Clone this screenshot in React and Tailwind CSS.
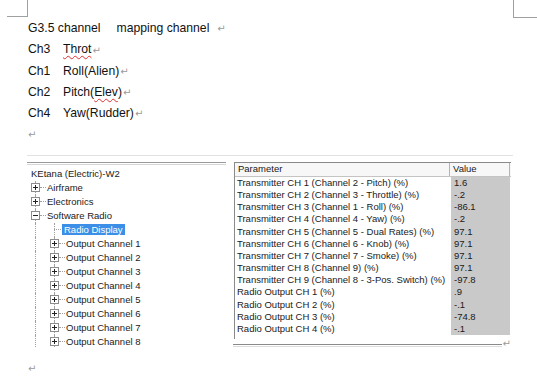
import React from "react";

const DOC_FONT = { fontFamily: '"Liberation Sans", Arial, sans-serif' };
const UI_FONT = { fontFamily: '"Liberation Sans", Tahoma, Arial, sans-serif' };

const rows = [
  ["Transmitter CH 1 (Channel 2 - Pitch) (%)", "1.6"],
  ["Transmitter CH 2 (Channel 3 - Throttle) (%)", "-.2"],
  ["Transmitter CH 3 (Channel 1 - Roll) (%)", "-86.1"],
  ["Transmitter CH 4 (Channel 4 - Yaw) (%)", "-.2"],
  ["Transmitter CH 5 (Channel 5 - Dual Rates) (%)", "97.1"],
  ["Transmitter CH 6 (Channel 6 - Knob) (%)", "97.1"],
  ["Transmitter CH 7 (Channel 7 - Smoke) (%)", "97.1"],
  ["Transmitter CH 8 (Channel 9) (%)", "97.1"],
  ["Transmitter CH 9 (Channel 8 - 3-Pos. Switch) (%)", "-97.8"],
  ["Radio Output CH 1 (%)", ".9"],
  ["Radio Output CH 2 (%)", "-.1"],
  ["Radio Output CH 3 (%)", "-74.8"],
  ["Radio Output CH 4 (%)", "-.1"],
];

function Ret({ className = "" }) {
  return (
    <span
      className={"text-[10px] text-[#9a9a9a] align-middle " + className}
      style={{ fontFamily: '"DejaVu Sans", sans-serif' }}
    >
      ↵
    </span>
  );
}

function ExpandBox({ open }) {
  return (
    <svg width="9" height="9" viewBox="0 0 9 9" className="relative block bg-white">
      <rect x="0.5" y="0.5" width="8" height="8" fill="#fff" stroke="#8c8c8c" />
      <line x1="2" y1="4.5" x2="7" y2="4.5" stroke="#222" />
      {!open && <line x1="4.5" y1="2" x2="4.5" y2="7" stroke="#222" />}
    </svg>
  );
}

function VLine() {
  return <div className="absolute left-[4px] top-0 bottom-0 border-l border-dotted border-[#a0a0a0]" />;
}

function LevelOne({ label, open }) {
  return (
    <div className="flex items-center h-[14px] pl-[4px]">
      <div className="relative w-[9px] h-full flex items-center">
        <VLine />
        <ExpandBox open={open} />
      </div>
      <div className="w-[6px] border-t border-dotted border-[#a0a0a0]" />
      <span className="ml-[1px]">{label}</span>
    </div>
  );
}

function LevelTwo({ label, leaf, selected }) {
  return (
    <div className="flex items-center h-[14px] pl-[4px]">
      <div className="relative w-[9px] h-full">
        <VLine />
      </div>
      <div className="w-[10px]" />
      <div className="relative w-[9px] h-full flex items-center">
        <VLine />
        {!leaf && <ExpandBox />}
      </div>
      <div className={(leaf ? "w-[7px] -ml-[5px] " : "w-[6px] ") + "border-t border-dotted border-[#a0a0a0]"} />
      {selected ? (
        <span className="ml-[1px] px-[2px] h-[11px] leading-[11px] bg-[#3b8fe6] text-white">{label}</span>
      ) : (
        <span className="ml-[1px]">{label}</span>
      )}
    </div>
  );
}

export default function App() {
  return (
    <div className="relative w-[537px] h-[382px] bg-white overflow-hidden text-[#111]" style={DOC_FONT}>
      <div className="absolute left-[27px] top-0 h-[17px] border-l border-[#a0a0a0]" />
      <div className="absolute left-[7px] top-[16px] w-[21px] border-t border-[#a0a0a0]" />
      <div className="absolute left-[513px] top-0 h-[18px] border-l border-[#a0a0a0]" />
      <div className="absolute left-[513px] top-[17px] w-[24px] border-t border-[#a0a0a0]" />

      <div className="pl-[28px] pt-[18px] text-[12.2px] leading-[21px]">
        <div>
          G3.5 channel<span className="ml-[16px]">mapping channel</span>
          <Ret className="ml-[8px]" />
        </div>
        <div className="flex">
          <span className="w-[35px]">Ch3</span>
          <span>
            <span className="underline decoration-wavy decoration-[#e03030] decoration-1 underline-offset-2">Throt</span>
            <Ret className="ml-[1px]" />
          </span>
        </div>
        <div className="flex">
          <span className="w-[35px]">Ch1</span>
          <span>
            Roll(Alien)
            <Ret className="ml-[1px]" />
          </span>
        </div>
        <div className="flex">
          <span className="w-[35px]">Ch2</span>
          <span>
            Pitch(
            <span className="underline decoration-wavy decoration-[#e03030] decoration-1 underline-offset-2">Elev</span>)
            <Ret className="ml-[1px]" />
          </span>
        </div>
        <div className="flex">
          <span className="w-[35px]">Ch4</span>
          <span>
            Yaw(Rudder)
            <Ret className="ml-[1px]" />
          </span>
        </div>
        <div>
          <Ret />
        </div>
      </div>

      <div className="ml-[27px] mt-[9px] w-[486px] border-t border-[#e2e2e2] pt-[5px] flex items-start text-[9.5px] text-[#1a1a1a]" style={UI_FONT}>
        <div className="w-[199px] h-[187px] overflow-hidden">
          <div className="mt-[1px] h-[3px] border-t border-[#9a9a9a] border-b border-b-[#d6d6d6]" />
          <div className="mt-[2px]">
            <div className="flex items-center h-[14px] pl-[4px]">KEtana (Electric)-W2</div>
            <LevelOne label="Airframe" />
            <LevelOne label="Electronics" />
            <LevelOne label="Software Radio" open />
            <LevelTwo label="Radio Display" leaf selected />
            {[1, 2, 3, 4, 5, 6, 7, 8].map((n) => (
              <LevelTwo key={n} label={`Output Channel ${n}`} />
            ))}
            <LevelTwo label="" />
          </div>
        </div>

        <div className="ml-[8px] mt-[1px] w-[277px]">
          <div className="border-l border-t border-[#8a8a8a] pb-[4px]">
            <div className="flex h-[14px] border-b border-[#c4c4c4] bg-[#f7f7f7] items-center">
              <div className="w-[215px] pl-[3px] border-r border-[#b4b4b4] h-full flex items-center">Parameter</div>
              <div className="w-[60px] pl-[3px] border-r border-[#b4b4b4] h-full flex items-center">Value</div>
            </div>
            {rows.map(([p, v], i) => (
              <div key={i} className="flex h-[12.2px] items-center leading-[12px]">
                <div className="w-[216px] pl-[2px] whitespace-nowrap">{p}</div>
                <div className="w-[59px] pl-[3px] h-full bg-[#c9c9c9] flex items-center">{v}</div>
              </div>
            ))}
          </div>
          <div className="flex items-center -ml-[1px]">
            <div className="w-[278px] h-[3px] border-t border-[#8a8a8a] border-b border-b-[#dcdcdc]" />
            <Ret className="ml-[1px] -mt-[3px]" />
          </div>
        </div>
      </div>

      <div className="pl-[28px] mt-[6px] leading-[21px]">
        <Ret />
      </div>
    </div>
  );
}
